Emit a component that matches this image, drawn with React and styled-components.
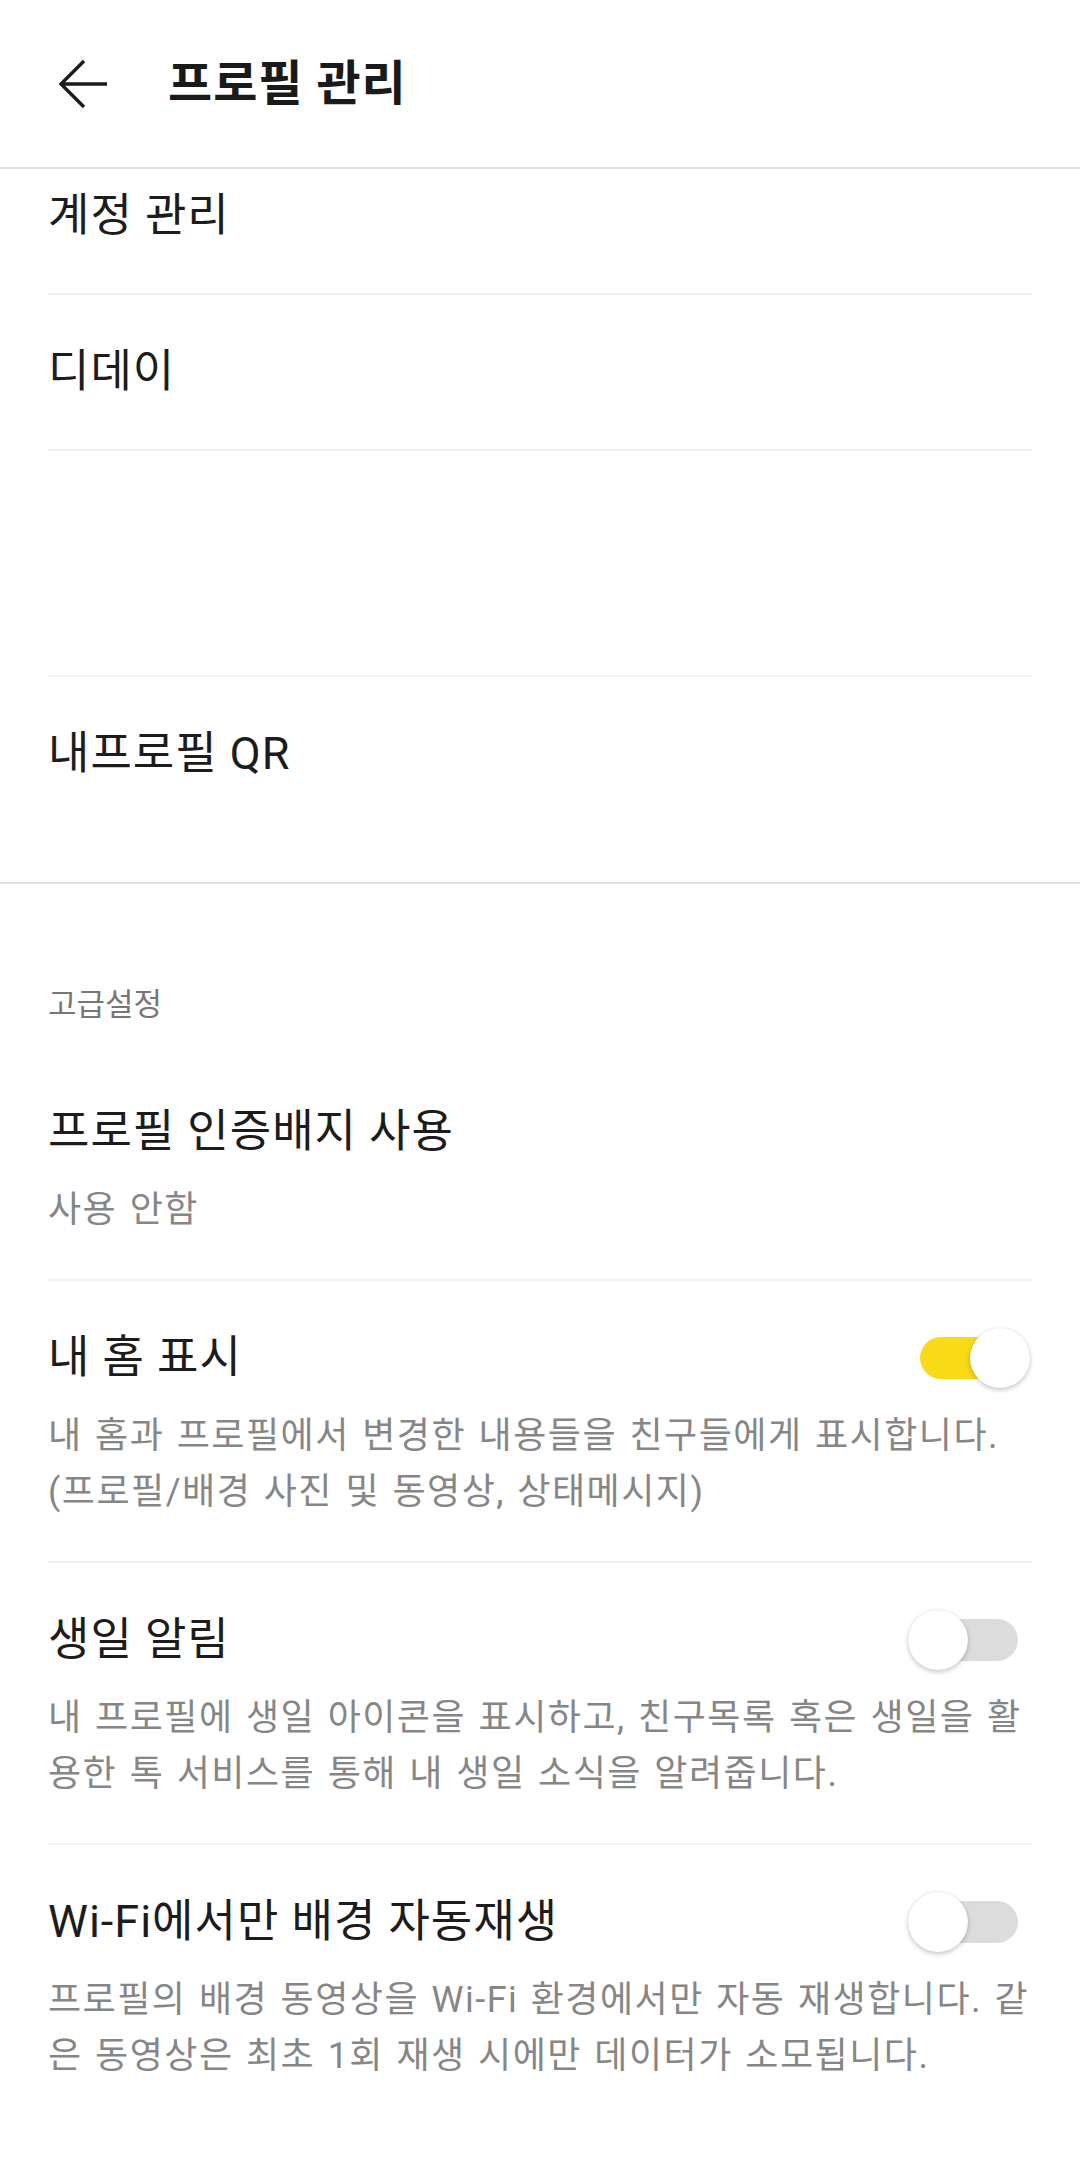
import styled, { createGlobalStyle } from 'styled-components'

const GlobalStyle = createGlobalStyle`
  html, body {
    margin: 0;
    padding: 0;
    background: #ffffff;
  }
  body {
    font-family: Roboto, "Noto Sans CJK KR", sans-serif;
    color: #1c1c1c;
    -webkit-font-smoothing: antialiased;
  }
`

const Page = styled.div`
  width: 1080px;
  min-height: 2168px;
  background: #fff;
`

const Header = styled.header`
  display: flex;
  align-items: center;
  gap: 60px;
  height: 167px;
  padding-left: 58px;
  border-bottom: 2px solid #e1e1e1;
  box-sizing: content-box;
`

const BackButton = styled.button`
  display: flex;
  align-items: center;
  justify-content: center;
  width: 50px;
  height: 50px;
  padding: 0;
  border: none;
  background: none;
  color: #1a1a1a;
`

const Title = styled.h1`
  margin: 0;
  font-size: 48px;
  font-weight: 700;
  letter-spacing: 1px;
  line-height: 58px;
  color: #1a1a1a;
`

const Section = styled.section`
  padding-bottom: ${p => p.$pb || 0}px;
  border-bottom: ${p => (p.$divided ? '2px solid #e1e1e1' : 'none')};
`

const SectionLabel = styled.div`
  margin: 0 48px;
  padding: 101px 0 30px;
  font-size: 31px;
  line-height: 40px;
  color: #777777;
`

const Item = styled.div`
  margin: 0 48px;
  padding: ${p => p.$pt ?? 48}px 0 ${p => p.$pb ?? 48}px;
  min-height: ${p => p.$minH || 0}px;
  box-sizing: border-box;
  border-bottom: ${p => (p.$last ? 'none' : '2px solid #f3f3f3')};
  font-size: 45px;
  letter-spacing: 1px;
  line-height: 58px;
  color: #1c1c1c;
`

const SettingRow = styled.div`
  margin: 0 48px;
  padding: 48px 0 41px;
  border-bottom: ${p => (p.$last ? 'none' : '2px solid #f3f3f3')};
`

const TopLine = styled.div`
  display: flex;
  align-items: center;
  justify-content: space-between;
  height: 58px;
`

const SettingTitle = styled.div`
  font-size: 45px;
  letter-spacing: 1px;
  line-height: 58px;
  color: #1c1c1c;
`

const Desc = styled.div`
  margin-top: 21px;
  font-size: 36px;
  letter-spacing: 1.5px;
  word-spacing: 2px;
  line-height: 56px;
  color: #868686;
  white-space: pre-line;
`

const Switch = styled.div`
  position: relative;
  flex: none;
  width: 122px;
  height: 60px;
  margin-right: 2px;
`

const Track = styled.div`
  position: absolute;
  left: 12px;
  right: 12px;
  top: 9px;
  height: 42px;
  border-radius: 21px;
  background: ${p => (p.$on ? '#f8da17' : '#dcdcdc')};
`

const Thumb = styled.div`
  position: absolute;
  top: 0;
  left: ${p => (p.$on ? 62 : 0)}px;
  width: 60px;
  height: 60px;
  border-radius: 50%;
  background: #ffffff;
  box-shadow: 0 2px 5px rgba(0, 0, 0, 0.22), 0 0 1px rgba(0, 0, 0, 0.15);
`

function Toggle({ on }) {
  return (
    <Switch>
      <Track $on={on} />
      <Thumb $on={on} />
    </Switch>
  )
}

function BackIcon() {
  return (
    <svg width="50" height="50" viewBox="0 0 50 50" fill="none">
      <path
        d="M49 25H3M26 2L3 25l23 23"
        stroke="currentColor"
        strokeWidth="3.4"
        strokeLinecap="butt"
        strokeLinejoin="miter"
      />
    </svg>
  )
}

const settings = [
  {
    title: '내 홈 표시',
    desc: '내 홈과 프로필에서 변경한 내용들을 친구들에게 표시합니다.\n(프로필/배경 사진 및 동영상, 상태메시지)',
    on: true,
  },
  {
    title: '생일 알림',
    desc: '내 프로필에 생일 아이콘을 표시하고, 친구목록 혹은 생일을 활\n용한 톡 서비스를 통해 내 생일 소식을 알려줍니다.',
    on: false,
  },
  {
    title: 'Wi-Fi에서만 배경 자동재생',
    desc: '프로필의 배경 동영상을 Wi-Fi 환경에서만 자동 재생합니다. 같\n은 동영상은 최초 1회 재생 시에만 데이터가 소모됩니다.',
    on: false,
  },
]

export default function App() {
  return (
    <Page>
      <GlobalStyle />
      <Header>
        <BackButton aria-label="뒤로">
          <BackIcon />
        </BackButton>
        <Title>프로필 관리</Title>
      </Header>

      <Section $divided $pb={51}>
        <Item $pt={18} $pb={48}>계정 관리</Item>
        <Item>디데이</Item>
        <Item $minH={226} />
        <Item $last>내프로필 QR</Item>
      </Section>

      <Section>
        <SectionLabel>고급설정</SectionLabel>
        <SettingRow>
          <TopLine>
            <SettingTitle>프로필 인증배지 사용</SettingTitle>
          </TopLine>
          <Desc>사용 안함</Desc>
        </SettingRow>
        {settings.map((s, i) => (
          <SettingRow key={s.title} $last={i === settings.length - 1}>
            <TopLine>
              <SettingTitle>{s.title}</SettingTitle>
              <Toggle on={s.on} />
            </TopLine>
            <Desc>{s.desc}</Desc>
          </SettingRow>
        ))}
      </Section>
    </Page>
  )
}
